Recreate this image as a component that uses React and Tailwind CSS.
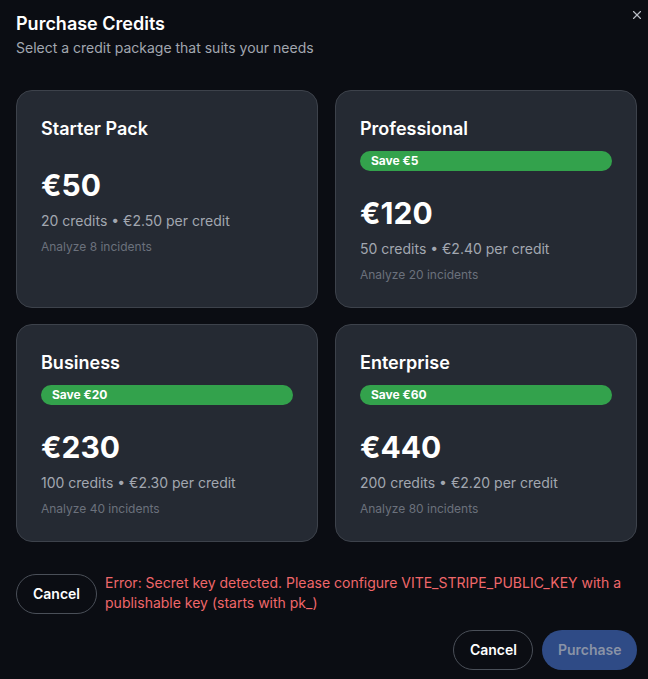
import { X } from 'lucide-react';

const packages = [
  { name: 'Starter Pack', price: 50, credits: 20, per: '2.50', incidents: 8 },
  { name: 'Professional', price: 120, credits: 50, per: '2.40', incidents: 20, save: 5 },
  { name: 'Business', price: 230, credits: 100, per: '2.30', incidents: 40, save: 20 },
  { name: 'Enterprise', price: 440, credits: 200, per: '2.20', incidents: 80, save: 60 },
];

function PackageCard({ pkg }) {
  return (
    <div className="bg-[#252a33] border border-[#3d424b] rounded-2xl p-6 flex flex-col">
      <h3 className="text-lg leading-7 font-semibold text-white">{pkg.name}</h3>
      {pkg.save && (
        <div className="mt-2 h-5 rounded-full bg-[#33a24c] px-[11px] flex items-center text-xs font-bold text-white">
          Save €{pkg.save}
        </div>
      )}
      <div className="mt-6 text-3xl leading-9 font-bold text-white">€{pkg.price}</div>
      <p className="mt-2 text-sm leading-5 text-[#a2a7b0]">
        {pkg.credits} credits • €{pkg.per} per credit
      </p>
      <p className="mt-2 text-xs leading-4 text-[#6b717c]">Analyze {pkg.incidents} incidents</p>
    </div>
  );
}

export default function App() {
  return (
    <div className="min-h-[679px] bg-[#0b0d13] font-['Inter',sans-serif] relative">
      <button className="absolute top-[6px] right-[2px] text-[#b8bcc4] p-0.5">
        <X size={14} strokeWidth={2} />
      </button>
      <div className="pt-[10px] px-4">
        <h2 className="text-lg leading-7 font-semibold text-white">Purchase Credits</h2>
        <p className="text-sm leading-5 text-[#a2a7b0]">Select a credit package that suits your needs</p>
      </div>

      <div className="mt-[32px] pl-4 pr-[11px] grid grid-cols-2 gap-x-[17px] gap-y-4">
        {packages.map((pkg) => (
          <PackageCard key={pkg.name} pkg={pkg} />
        ))}
      </div>

      <div className="mt-[32px] px-4 flex items-start gap-2">
        <button className="shrink-0 h-10 px-4 rounded-full border border-[#4a4f58] text-sm font-semibold text-white">
          Cancel
        </button>
        <p className="-mt-[1px] text-sm leading-5 text-[#f0676a]">
          Error: Secret key detected. Please configure VITE_STRIPE_PUBLIC_KEY with a publishable key (starts with pk_)
        </p>
      </div>

      <div className="mt-[16px] pr-[11px] flex justify-end gap-[9px]">
        <button className="h-10 px-[15.5px] rounded-full border border-[#4a4f58] text-sm font-semibold text-white">
          Cancel
        </button>
        <button className="h-10 px-[15.5px] rounded-full bg-[#2f4b86] text-sm font-semibold text-[#8a93a6]">
          Purchase
        </button>
      </div>
    </div>
  );
}
